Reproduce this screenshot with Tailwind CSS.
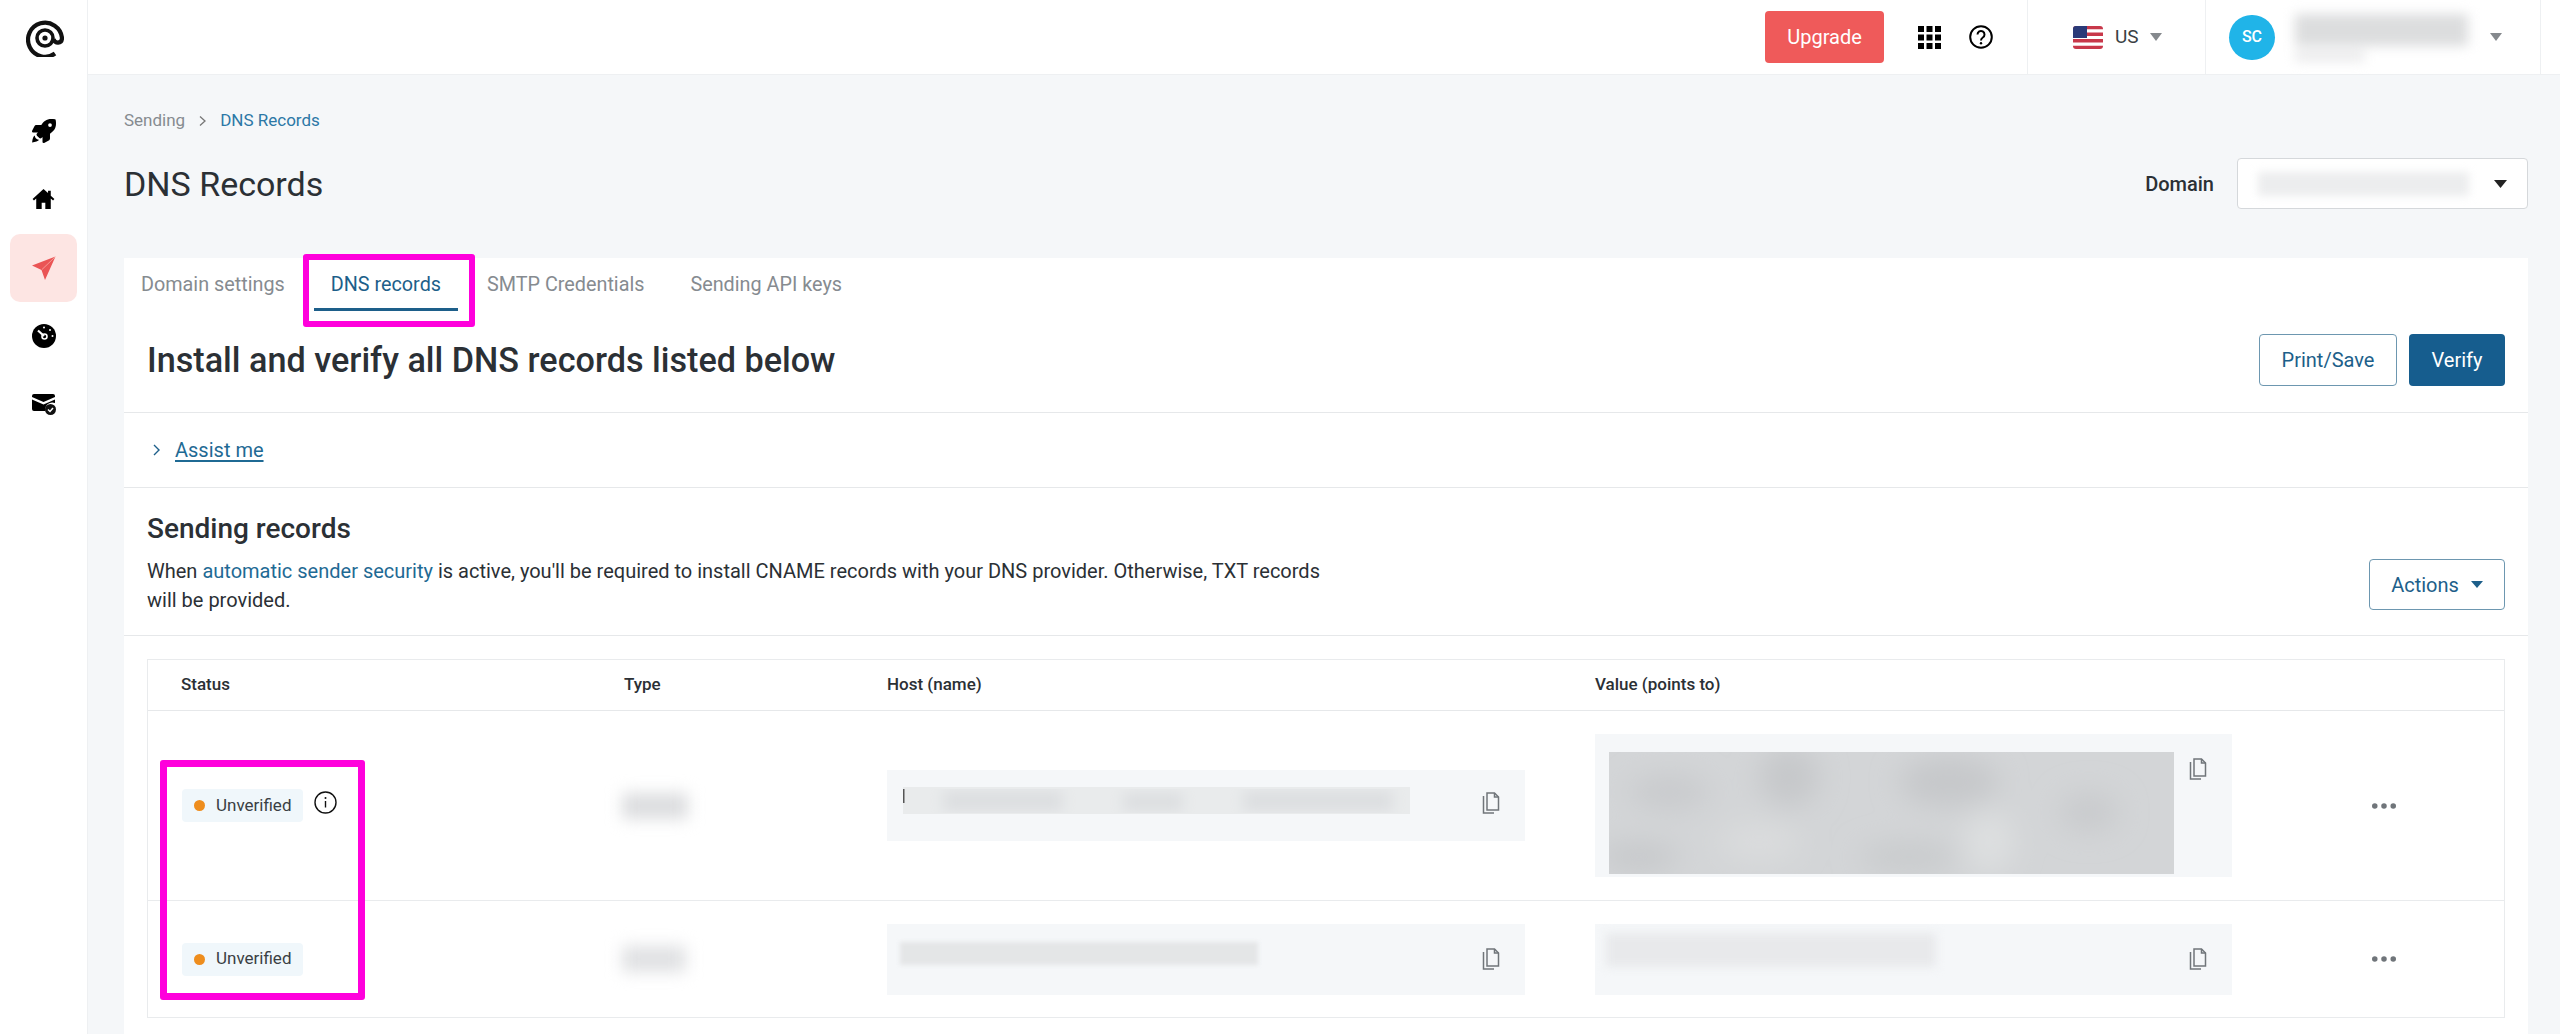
<!DOCTYPE html>
<html lang="en">
<head>
  <meta charset="UTF-8" />
  <title>DNS Records</title>
  <script src="https://cdn.jsdelivr.net/npm/@tailwindcss/browser@4"></script>
</head>
<body class="relative flex h-screen w-full overflow-hidden bg-[#f5f7f9] font-[Roboto,sans-serif] text-[#2b3035]">

  <!-- sidebar -->
  <aside class="flex w-[88px] shrink-0 flex-col items-center border-r border-[#eef0f2] bg-white">
    <svg class="mt-[19px] ml-[2px] h-[38px] w-[38px]" viewBox="0 0 38 38" fill="none" stroke="#111" stroke-width="4.2" stroke-linecap="butt">
      <path d="M29 34.500A17 17 0 1 1 36 19c0 6-7.500 6-8.500 1" />
      <circle cx="19" cy="19" r="8" stroke-width="3.600" />
      <circle cx="19" cy="19" r="2.600" fill="#111" stroke="none" />
    </svg>
    <svg class="mt-[62px] h-[24px] w-[24px]" viewBox="0 0 512 512" fill="#000">
      <path d="M505.120 19.090c-1.190-5.530-6.660-11-12.210-12.180C460.720 0 435.510 0 410.410 0 307.180 0 245.270 55.200 199.050 128H94.840c-16.350.02-35.560 11.880-42.890 26.480L2.520 253.300A28.400 28.400 0 0 0 0 264a24 24 0 0 0 24 24h103.820l-22.480 22.470c-11.360 11.360-13 32.260 0 45.250l50.910 50.900c11.150 11.190 32.150 13.160 45.270 0L224 384.160V488a24 24 0 0 0 24 24 28.560 28.560 0 0 0 10.710-2.520l98.730-49.390c14.630-7.290 26.510-26.500 26.510-42.850V312.800c72.600-46.310 128.030-108.410 128.030-211.100.02-25.200.02-50.400-6.860-82.610zM384.040 168a40 40 0 1 1 40.010-40 40 40 0 0 1-40.010 40z" />
      <path d="M60 350c-30 12-50 60-58 150 70-6 130-28 150-58-30 0-92-30-92-92z" />
    </svg>
    <svg class="mt-[46px] h-[20px] w-[23px]" viewBox="0 0 24 22" fill="#000">
      <path d="M12 0 0 11l1.500 1.700L4 10.500V22h6v-7h4v7h6V10.500l2.500 2.200L24 11l-4-3.700V2h-3v2.500z" />
    </svg>
    <div class="mt-[25px] flex h-[68px] w-[67px] items-center justify-center rounded-[10px] bg-[#fde5e3]">
      <svg class="h-[24px] w-[24px]" viewBox="0 0 24 24">
        <path d="M23.500.5 0 9.500 9.500 14 13 24z" fill="#ea5455" />
        <path d="m23 1-13 12.500" stroke="#f7a9a5" stroke-width=".8" />
      </svg>
    </div>
    <svg class="mt-[22px] h-[24px] w-[24px]" viewBox="0 0 24 24">
      <circle cx="12" cy="12" r="12" fill="#000" />
      <path d="M6 6.500 12 12" stroke="#fff" stroke-width="2.200" />
      <circle cx="12.500" cy="12.500" r="2.500" fill="none" stroke="#fff" stroke-width="1.600" />
      <circle cx="12" cy="3.500" r="1" fill="#fff" /><circle cx="18" cy="6" r="1" fill="#fff" /><circle cx="20.500" cy="12" r="1" fill="#fff" />
    </svg>
    <svg class="mt-[46px] h-[22px] w-[24px]" viewBox="0 0 24 22">
      <path d="M2 0h19a2 2 0 0 1 2 2v1L11.500 8 0 3V2a2 2 0 0 1 2-2zM0 5.500l11.500 5L23 5.500V9a7 7 0 0 0-9.500 8H2a2 2 0 0 1-2-2z" fill="#000" />
      <circle cx="18.500" cy="15.500" r="5.500" fill="#111" />
      <path d="m16 15.500 2 2 3-3.500" fill="none" stroke="#fff" stroke-width="1.500" />
    </svg>
  </aside>

  <div class="flex min-w-0 flex-1 flex-col">
    <!-- top bar -->
    <header class="flex h-[75px] shrink-0 items-center justify-end border-b border-[#eef0f2] bg-white pr-[19px]">
      <div class="flex h-full items-center pr-[34px]">
        <button class="h-[52px] w-[119px] rounded-[4px] bg-[#ef5a5a] text-[20px] text-white">Upgrade</button>
        <svg class="ml-[34px] h-[23px] w-[23px]" viewBox="0 0 23 23" fill="#000">
          <rect width="6" height="6" /><rect x="8.500" width="6" height="6" /><rect x="17" width="6" height="6" />
          <rect y="8.500" width="6" height="6" /><rect x="8.500" y="8.500" width="6" height="6" /><rect x="17" y="8.500" width="6" height="6" />
          <rect y="17" width="6" height="6" /><rect x="8.500" y="17" width="6" height="6" /><rect x="17" y="17" width="6" height="6" />
        </svg>
        <svg class="ml-[28px] h-[24px] w-[24px]" viewBox="0 0 24 24" fill="none" stroke="#000" stroke-width="2">
          <circle cx="12" cy="12" r="10.800" />
          <path d="M8.500 9.500a3.500 3.500 0 1 1 5.300 3c-1.300.8-1.800 1.500-1.800 3" />
          <circle cx="12" cy="18.200" r="1.200" fill="#000" stroke="none" />
        </svg>
      </div>
      <div class="flex h-full w-[178px] items-center border-l border-[#eef0f2] pl-[45px]">
        <svg class="h-[23px] w-[30px] rounded-[3px]" viewBox="0 0 30 23">
          <rect width="30" height="23" fill="#fff" />
          <path d="M0 0h30v3.300H0zM0 6.600h30v3.300H0zM0 13.100h30v3.300H0zM0 19.700h30V23H0z" fill="#c8384a" />
          <rect width="14" height="12" fill="#2a3a78" />
        </svg>
        <span class="ml-[12px] text-[19px] text-[#3a3f44]">US</span>
        <svg class="ml-[11px] h-[8px] w-[12px]" viewBox="0 0 12 8" fill="#85898d"><path d="M0 0h12L6 8z" /></svg>
      </div>
      <div class="flex h-full w-[336px] items-center border-x border-[#eef0f2] pl-[23px]">
        <div class="flex h-[45px] w-[46px] shrink-0 items-center justify-center rounded-full bg-[#20b4e8] text-[16px] font-medium text-white">SC</div>
        <div class="ml-[20px] w-[173px] blur-[6px]">
          <div class="h-[32px] w-[173px] bg-[#dcddde]"></div>
          <div class="mt-[5px] h-[10px] w-[70px] bg-[#e9e9ea]"></div>
        </div>
        <svg class="ml-[22px] h-[8px] w-[12px]" viewBox="0 0 12 8" fill="#85898d"><path d="M0 0h12L6 8z" /></svg>
      </div>
    </header>

    <main class="flex min-h-0 flex-1 flex-col pr-[32px] pl-[36px]">
      <nav class="mt-[34px] flex h-[24px] items-center text-[17px] text-[#868b90]">
        <span>Sending</span>
        <svg class="mx-[14px] h-[10px] w-[7px]" viewBox="0 0 7 10" fill="none" stroke="#777" stroke-width="1.300"><path d="m1 .5 5 4.500-5 4.500" /></svg>
        <span class="text-[#2c78a6]">DNS Records</span>
      </nav>

      <div class="mt-[25px] flex h-[51px] items-center justify-between">
        <h1 class="text-[34px] leading-none font-normal text-[#2b3035]">DNS Records</h1>
        <div class="flex items-center">
          <span class="text-[20px] font-medium text-[#2b3035]">Domain</span>
          <div class="ml-[23px] flex h-[51px] w-[291px] items-center rounded-[4px] border border-[#d5d8db] bg-white pl-[20px]">
            <div class="h-[24px] w-[211px] bg-[#ecedee] blur-[4px]"></div>
            <svg class="ml-[25px] h-[8px] w-[13px]" viewBox="0 0 13 8" fill="#222"><path d="M0 0h13L6.500 8z" /></svg>
          </div>
        </div>
      </div>

      <section class="mt-[49px] min-h-0 flex-1 bg-white">
        <!-- tabs -->
        <div class="flex h-[53px] gap-3 text-[19.8px] text-[#868b90]">
          <a class="border-b-[3px] border-transparent px-[17px] pt-[12px]">Domain settings</a>
          <a class="border-b-[3px] border-[#1d5f8a] px-[17px] pt-[12px] text-[#1d5f8a]">DNS records</a>
          <a class="border-b-[3px] border-transparent px-[17px] pt-[12px]">SMTP Credentials</a>
          <a class="border-b-[3px] border-transparent px-[17px] pt-[12px]">Sending API keys</a>
        </div>

        <div class="flex h-[102px] items-start justify-between border-b border-[#e6e8ea] px-[23px] pt-[23px]">
          <h2 class="mt-[4px] text-[34.2px] leading-[44px] font-medium text-[#2b3035]">Install and verify all DNS records listed below</h2>
          <div class="flex gap-3">
            <button class="h-[52px] w-[138px] rounded-[4px] border border-[#6d97b0] text-[20px] text-[#1d5f8a]">Print/Save</button>
            <button class="h-[52px] w-[96px] rounded-[4px] bg-[#165d8e] text-[20px] text-white">Verify</button>
          </div>
        </div>

        <div class="flex h-[75px] items-center border-b border-[#e6e8ea] pl-[29px]">
          <svg class="h-[12px] w-[7px]" viewBox="0 0 7 12" fill="none" stroke="#1d5f8a" stroke-width="1.400"><path d="m1 1 5 5-5 5" /></svg>
          <a class="ml-[15px] text-[20px] text-[#1f6a94] underline underline-offset-[3px]">Assist me</a>
        </div>

        <div class="flex items-end justify-between border-b border-[#e6e8ea] px-[23px] pt-[24px] pb-[20px]">
          <div>
            <h3 class="text-[28px] leading-[34px] font-medium text-[#2b3035]">Sending records</h3>
            <p class="mt-[11px] w-[1180px] text-[20px] leading-[29px] text-[#2b3035]">When <a class="text-[#1f6a94]">automatic sender security</a> is active, you'll be required to install CNAME records with your DNS provider. Otherwise, TXT records will be provided.</p>
          </div>
          <button class="mb-[5px] flex h-[51px] w-[136px] items-center justify-center gap-[12px] rounded-[4px] border border-[#6d97b0] text-[20px] text-[#1d5f8a]">Actions
            <svg class="h-[7px] w-[12px]" viewBox="0 0 12 7" fill="#1d5f8a"><path d="M0 0h12L6 7z" /></svg>
          </button>
        </div>

        <!-- records table -->
        <div class="mx-[23px] mt-[23px] border border-[#e9ebed]">
          <div class="grid h-[51px] grid-cols-[476px_263px_708px_1fr] items-center border-b border-[#e6e8ea] text-[17px] font-medium text-[#2b3035]">
            <div class="pl-[33px]">Status</div>
            <div>Type</div>
            <div>Host (name)</div>
            <div>Value (points to)</div>
          </div>

          <div class="grid h-[190px] grid-cols-[476px_263px_638px_70px_637px_1fr] items-center border-b border-[#e9ebed]">
            <div class="flex items-center pl-[34px]">
              <span class="flex h-[33px] w-[121px] items-center rounded-[4px] bg-[#f0f7fb] pl-[12px] text-[17px] text-[#3a3f44]"><i class="mr-[11px] h-[11px] w-[11px] rounded-full bg-[#ee8d1d]"></i>Unverified</span>
              <svg class="mt-[-6px] ml-[11px] h-[23px] w-[23px]" viewBox="0 0 23 23" fill="none" stroke="#111" stroke-width="1.400">
                <circle cx="11.500" cy="11.500" r="10.500" /><path d="M11.500 10v6.500" /><circle cx="11.500" cy="7" r="1" fill="#111" stroke="none" />
              </svg>
            </div>
            <div class="ml-[-2px] h-[26px] w-[66px] bg-[#dcdddf] blur-[8px]"></div>
            <div class="flex h-[71px] items-start bg-[#f5f7f9]">
              <svg class="mt-[17px] ml-[16px] h-[27px] w-[507px]" viewBox="0 0 507 27">
                <filter id="hostA"><feGaussianBlur stdDeviation="7" /></filter>
                <rect width="507" height="27" fill="#e9ebec" />
                <g filter="url(#hostA)" fill="#dcdee0"><rect x="40" y="4" width="120" height="20" /><rect x="220" y="6" width="60" height="18" /><rect x="340" y="4" width="150" height="20" /></g>
                <rect y="2" width="1.500" height="14" fill="#555" />
              </svg>
              <svg class="mt-[22px] mr-[25px] ml-auto h-[22px] w-[18px]" viewBox="0 0 18 22" fill="none" stroke="#70757a" stroke-width="1.500">
                <path d="M5 1h7.500L16.500 5v13H5z" /><path d="M12.500 1v4h4" /><path d="M1.500 4v17H12" />
              </svg>
            </div>
            <div></div>
            <div class="flex h-[143px] items-start bg-[#f5f7f9]">
              <svg class="mt-[18px] ml-[14px] h-[122px] w-[565px]" viewBox="0 0 565 122">
                <filter id="valueA"><feGaussianBlur stdDeviation="14" /></filter>
                <rect width="565" height="122" fill="#d3d5d7" />
                <g filter="url(#valueA)">
                  <ellipse cx="60" cy="40" rx="40" ry="18" fill="#c9cbcd" /><ellipse cx="180" cy="25" rx="30" ry="30" fill="#c6c8ca" />
                  <ellipse cx="150" cy="90" rx="40" ry="20" fill="#dadcdd" /><ellipse cx="340" cy="30" rx="50" ry="25" fill="#c6c8ca" />
                  <ellipse cx="380" cy="90" rx="25" ry="30" fill="#dddfe0" /><ellipse cx="300" cy="105" rx="50" ry="14" fill="#c8cacc" />
                  <ellipse cx="480" cy="60" rx="30" ry="20" fill="#c9cbcd" /><ellipse cx="30" cy="105" rx="40" ry="14" fill="#c6c8ca" />
                </g>
              </svg>
              <svg class="mt-[24px] mr-[25px] ml-auto h-[22px] w-[18px]" viewBox="0 0 18 22" fill="none" stroke="#70757a" stroke-width="1.500">
                <path d="M5 1h7.500L16.500 5v13H5z" /><path d="M12.500 1v4h4" /><path d="M1.500 4v17H12" />
              </svg>
            </div>
            <svg class="ml-[140px] h-[6px] w-[24px]" viewBox="0 0 26 6" fill="#70757a"><circle cx="3" cy="3" r="3" /><circle cx="13" cy="3" r="3" /><circle cx="23" cy="3" r="3" /></svg>
          </div>

          <div class="grid h-[116px] grid-cols-[476px_263px_638px_70px_637px_1fr] items-center">
            <div class="pl-[34px]">
              <span class="flex h-[33px] w-[121px] items-center rounded-[4px] bg-[#f0f7fb] pl-[12px] text-[17px] text-[#3a3f44]"><i class="mr-[11px] h-[11px] w-[11px] rounded-full bg-[#ee8d1d]"></i>Unverified</span>
            </div>
            <div class="ml-[-2px] h-[26px] w-[64px] bg-[#e0e1e3] blur-[8px]"></div>
            <div class="flex h-[71px] items-start bg-[#f5f7f9]">
              <div class="mt-[18px] ml-[13px] h-[23px] w-[358px] bg-[#e4e6e7] blur-[2px]"></div>
              <svg class="mt-[24px] mr-[25px] ml-auto h-[22px] w-[18px]" viewBox="0 0 18 22" fill="none" stroke="#70757a" stroke-width="1.500">
                <path d="M5 1h7.500L16.500 5v13H5z" /><path d="M12.500 1v4h4" /><path d="M1.500 4v17H12" />
              </svg>
            </div>
            <div></div>
            <div class="flex h-[71px] items-start bg-[#f5f7f9]">
              <div class="mt-[9px] ml-[11px] h-[34px] w-[330px] bg-[#e8e9eb] blur-[5px]"></div>
              <svg class="mt-[24px] mr-[25px] ml-auto h-[22px] w-[18px]" viewBox="0 0 18 22" fill="none" stroke="#70757a" stroke-width="1.500">
                <path d="M5 1h7.500L16.500 5v13H5z" /><path d="M12.500 1v4h4" /><path d="M1.500 4v17H12" />
              </svg>
            </div>
            <svg class="ml-[140px] h-[6px] w-[24px]" viewBox="0 0 26 6" fill="#70757a"><circle cx="3" cy="3" r="3" /><circle cx="13" cy="3" r="3" /><circle cx="23" cy="3" r="3" /></svg>
          </div>
        </div>
      </section>
    </main>
  </div>

  <!-- annotation boxes drawn over the screenshot -->
  <div class="pointer-events-none absolute top-[254px] left-[303px] h-[73px] w-[172px] rounded-[3px] border-[6px] border-[#ff00dc]"></div>
  <div class="pointer-events-none absolute top-[760px] left-[160px] h-[240px] w-[205px] rounded-[3px] border-[7px] border-[#ff00dc]"></div>
</body>
</html>
